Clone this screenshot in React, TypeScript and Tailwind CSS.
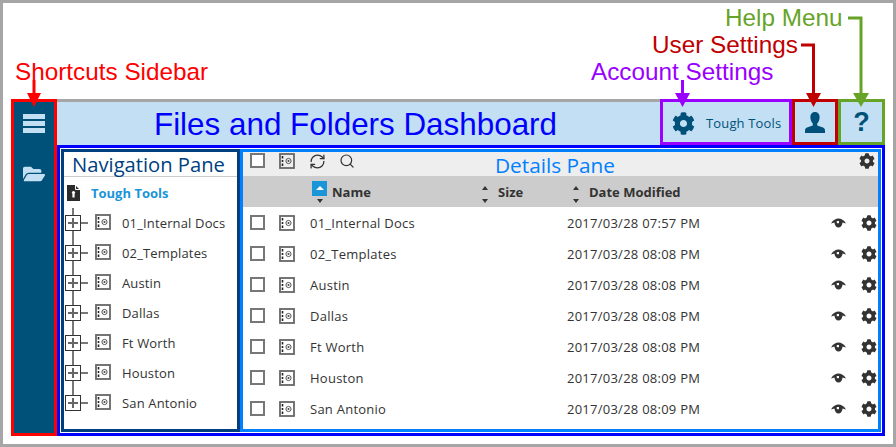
import { FaCog, FaFolderOpen } from "react-icons/fa";
import { RefreshCw, Search } from "lucide-react";

const navFolders = ["01_Internal Docs", "02_Templates", "Austin", "Dallas", "Ft Worth", "Houston", "San Antonio"];

const fileRows = [
  { name: "01_Internal Docs", modified: "2017/03/28 07:57 PM" },
  { name: "02_Templates", modified: "2017/03/28 08:08 PM" },
  { name: "Austin", modified: "2017/03/28 08:08 PM" },
  { name: "Dallas", modified: "2017/03/28 08:08 PM" },
  { name: "Ft Worth", modified: "2017/03/28 08:08 PM" },
  { name: "Houston", modified: "2017/03/28 08:09 PM" },
  { name: "San Antonio", modified: "2017/03/28 08:09 PM" }
];

function SafeIcon() {
  return (
    <svg width="16" height="16" viewBox="0 0 16 16" className="shrink-0">
      <rect x="1" y="1" width="14" height="14" fill="none" stroke="#666" strokeWidth="1.8" />
      <path d="M3.5 3v2.5M3.5 7v2M3.5 10.5v2.5" stroke="#222" strokeWidth="1.6" />
      <circle cx="9.5" cy="8" r="2.6" fill="none" stroke="#555" strokeWidth="1" />
      <circle cx="9.5" cy="8" r="1" fill="#444" />
    </svg>
  );
}

function EyeIcon() {
  return (
    <svg width="15" height="10" viewBox="0 0 15 10" className="shrink-0">
      <path d="M0 5.4C2.2 2 4.8 .6 7.5 .6S12.8 2 15 5.4C13.6 5 12.6 4.6 11.6 4.4 11.2 7.4 9.6 9.4 7.5 9.4S3.8 7.4 3.4 4.4C2.4 4.6 1.4 5 0 5.4Z" fill="#333" />
      <rect x="5.8" y="3" width="2.2" height="2.2" fill="#fff" />
    </svg>
  );
}

function Checkbox() {
  return <div className="h-[15px] w-[15px] shrink-0 border-2 border-[#777] bg-white" />;
}

function SortArrows({ active }: { active?: boolean }) {
  return (
    <div className="flex w-[15px] flex-col items-center">
      <div className={active ? "flex h-[15px] w-[15px] items-center justify-center bg-[#1a95d8]" : "flex h-[15px] w-[15px] items-center justify-center"}>
        <div className={active ? "h-0 w-0 border-x-[4px] border-b-[4px] border-x-transparent border-b-white" : "h-0 w-0 border-x-[3.5px] border-b-[4px] border-x-transparent border-b-[#333]"} />
      </div>
      <div className="mt-[3px] h-0 w-0 border-x-[3.5px] border-t-[4px] border-x-transparent border-t-[#333]" />
    </div>
  );
}

function TreeRow({ label, last }: { label: string; last: boolean }) {
  return (
    <div className="relative flex h-[30px] items-center font-['Open_Sans',sans-serif] text-[13px] text-[#333]">
      <div className={last ? "absolute left-[8px] top-0 h-[15px] w-[2px] bg-[#777]" : "absolute left-[8px] top-0 h-[30px] w-[2px] bg-[#777]"} />
      <div className="relative ml-px flex h-4 w-4 items-center justify-center border border-[#333] bg-white">
        <div className="absolute h-[2px] w-[10px] bg-[#666]" />
        <div className="absolute h-[10px] w-[2px] bg-[#666]" />
      </div>
      <div className="h-[2px] w-[7px] bg-[#777]" />
      <div className="-mt-[2px] ml-[7px]">
        <SafeIcon />
      </div>
      <span className="ml-[11px] pt-px tracking-[0.15px]">{label}</span>
    </div>
  );
}

function FileRow({ name, modified }: { name: string; modified: string }) {
  return (
    <div className="flex h-[31px] items-center pl-[7px] font-['Open_Sans',sans-serif] text-[13px] text-[#333]">
      <Checkbox />
      <div className="ml-[14px]">
        <SafeIcon />
      </div>
      <span className="ml-[15px] w-[257px] pt-[2px] tracking-[0.25px]">{name}</span>
      <span className="w-[264px] pt-[2px] tracking-[0.25px]">{modified}</span>
      <EyeIcon />
      <FaCog className="ml-[15px] text-[16px] text-[#333]" />
    </div>
  );
}

function Annotations() {
  return (
    <>
      <div className="absolute left-[12px] top-[56px] font-['Liberation_Sans',sans-serif] text-[24.3px] leading-[26px] text-[#ff0000]">Shortcuts Sidebar</div>
      <div className="absolute left-[588px] top-[56px] font-['Liberation_Sans',sans-serif] text-[24.3px] leading-[26px] text-[#9900ff]">Account Settings</div>
      <div className="absolute left-[649px] top-[29px] font-['Liberation_Sans',sans-serif] text-[24.3px] leading-[26px] text-[#c00000]">User Settings</div>
      <div className="absolute left-[722px] top-[2px] font-['Liberation_Sans',sans-serif] text-[24.3px] leading-[26px] text-[#66a428]">Help Menu</div>
      <svg width="896" height="447" className="pointer-events-none absolute -left-[3px] -top-[3px]">
        <path d="M34 80V98" stroke="#ff0000" strokeWidth="3" fill="none" />
        <path d="M27 93H41L34 107Z" fill="#ff0000" />
        <path d="M682.5 80V98" stroke="#9900ff" strokeWidth="3" fill="none" />
        <path d="M675 93H690L682.5 107Z" fill="#9900ff" />
        <path d="M801 45H813.5V98" stroke="#c00000" strokeWidth="3" fill="none" />
        <path d="M806 93H821L813.5 107Z" fill="#c00000" />
        <path d="M848 18H861V98" stroke="#66a428" strokeWidth="3" fill="none" />
        <path d="M853 93H869L861 107Z" fill="#66a428" />
      </svg>
    </>
  );
}

export default function App() {
  return (
    <div className="relative h-[447px] w-[896px] overflow-hidden border-[3px] border-[#a6a6a6] bg-white">
      <Annotations />
      <div className="ml-[8px] mr-[8px] mt-[96px] flex h-[337px]">
        <aside className="flex w-[46px] shrink-0 flex-col items-center border-[3px] border-[#ff0000] bg-[#00517a]">
          <div className="mt-[12px] flex w-[22px] flex-col gap-[2px]">
            <div className="h-[5px] bg-[#c3dff3]" />
            <div className="h-[5px] bg-[#c3dff3]" />
            <div className="h-[5px] bg-[#c3dff3]" />
          </div>
          <FaFolderOpen className="mt-[30px] text-[22px] text-[#c3dff3]" />
        </aside>

        <div className="flex min-w-0 flex-1 flex-col">
          <header className="flex h-[46px] shrink-0 bg-[#c3dff3]">
            <div className="flex flex-1 items-center justify-center border-t-[3px] border-[#a6a6a6] pr-[6px] pt-[3px]">
              <h1 className="font-['Liberation_Sans',sans-serif] text-[31.4px] leading-none text-[#0000ff]">Files and Folders Dashboard</h1>
            </div>
            <div className="flex w-[132px] items-center border-[3px] border-[#9900ff] pl-[9px] pt-[2px] font-['Open_Sans',sans-serif] text-[13px] text-[#00517a]">
              <FaCog className="text-[23px]" />
              <span className="ml-[11px] pt-[2px] tracking-[0.15px]">Tough Tools</span>
            </div>
            <div className="flex w-[46px] items-center justify-center border-[3px] border-[#c00000]">
              <svg width="20" height="21" viewBox="0 0 20 21">
                <path d="M10 0C13 0 14.6 2.2 14.6 5.2 14.6 8 13.4 10.4 12.2 11.6V13.4L18 15.6C19.4 16.2 20 17.2 20 18.6V21H0V18.6C0 17.2.6 16.2 2 15.6L7.8 13.4V11.6C6.6 10.4 5.4 8 5.4 5.2 5.4 2.2 7 0 10 0Z" fill="#00517a" />
              </svg>
            </div>
            <div className="flex w-[47px] items-center justify-center border-[3px] border-[#66a428] font-['Liberation_Sans',sans-serif] text-[27px] font-bold leading-none text-[#00517a]">?</div>
          </header>

          <div className="flex min-h-0 flex-1 border-[3px] border-[#0000ff] p-px">
            <nav className="w-[179px] shrink-0 border-[3px] border-[#003f7f]">
              <div className="flex h-[25px] items-center justify-center border-b border-[#ccc] pr-[4px] font-['Open_Sans',sans-serif] text-[20.2px] leading-none text-[#003f7f]">Navigation Pane</div>
              <div className="flex h-[31px] items-center pl-[3px]">
                <svg width="13" height="16" viewBox="0 0 13 16">
                  <path d="M0 0H8L13 5V16H0Z" fill="#2b2b2b" />
                  <path d="M8.5 0V4.5H13" fill="none" stroke="#fff" strokeWidth="1" />
                  <circle cx="6.5" cy="7.5" r="1.6" fill="#fff" />
                  <rect x="5.4" y="8.5" width="2.2" height="4" fill="#fff" />
                </svg>
                <span className="ml-[11px] pt-[2px] font-['Open_Sans',sans-serif] text-[13px] font-bold text-[#1a95d8]">Tough Tools</span>
              </div>
              {navFolders.map((label, i) => (
                <TreeRow key={label} label={label} last={i === navFolders.length - 1} />
              ))}
            </nav>

            <section className="min-w-0 flex-1 border-[3px] border-[#0080ff]">
              <div className="relative flex h-[24px] items-start bg-[#eeeeee] pl-[7px] pt-px">
                <Checkbox />
                <div className="ml-[14px]">
                  <SafeIcon />
                </div>
                <RefreshCw size={17} strokeWidth={1.8} className="ml-[14px] text-[#333]" />
                <Search size={16} strokeWidth={1.8} className="ml-[13px] text-[#333]" />
                <div className="absolute left-[252px] top-[1px] font-['Open_Sans',sans-serif] text-[20.8px] leading-[24px] text-[#0080ff]">Details Pane</div>
                <FaCog className="absolute left-[616px] top-px text-[16px] text-[#333]" />
              </div>
              <div className="flex h-[31px] items-center bg-[#cccccc] pl-[69px] font-['Open_Sans',sans-serif] text-[13px] font-bold text-[#333]">
                <SortArrows active />
                <span className="ml-[5px] w-[145px] pt-[2px]">Name</span>
                <SortArrows />
                <span className="ml-[6px] w-[70px] pt-[2px]">Size</span>
                <SortArrows />
                <span className="ml-[6px] pt-[2px]">Date Modified</span>
              </div>
              {fileRows.map((row) => (
                <FileRow key={row.name} name={row.name} modified={row.modified} />
              ))}
            </section>
          </div>
        </div>
      </div>
    </div>
  );
}
